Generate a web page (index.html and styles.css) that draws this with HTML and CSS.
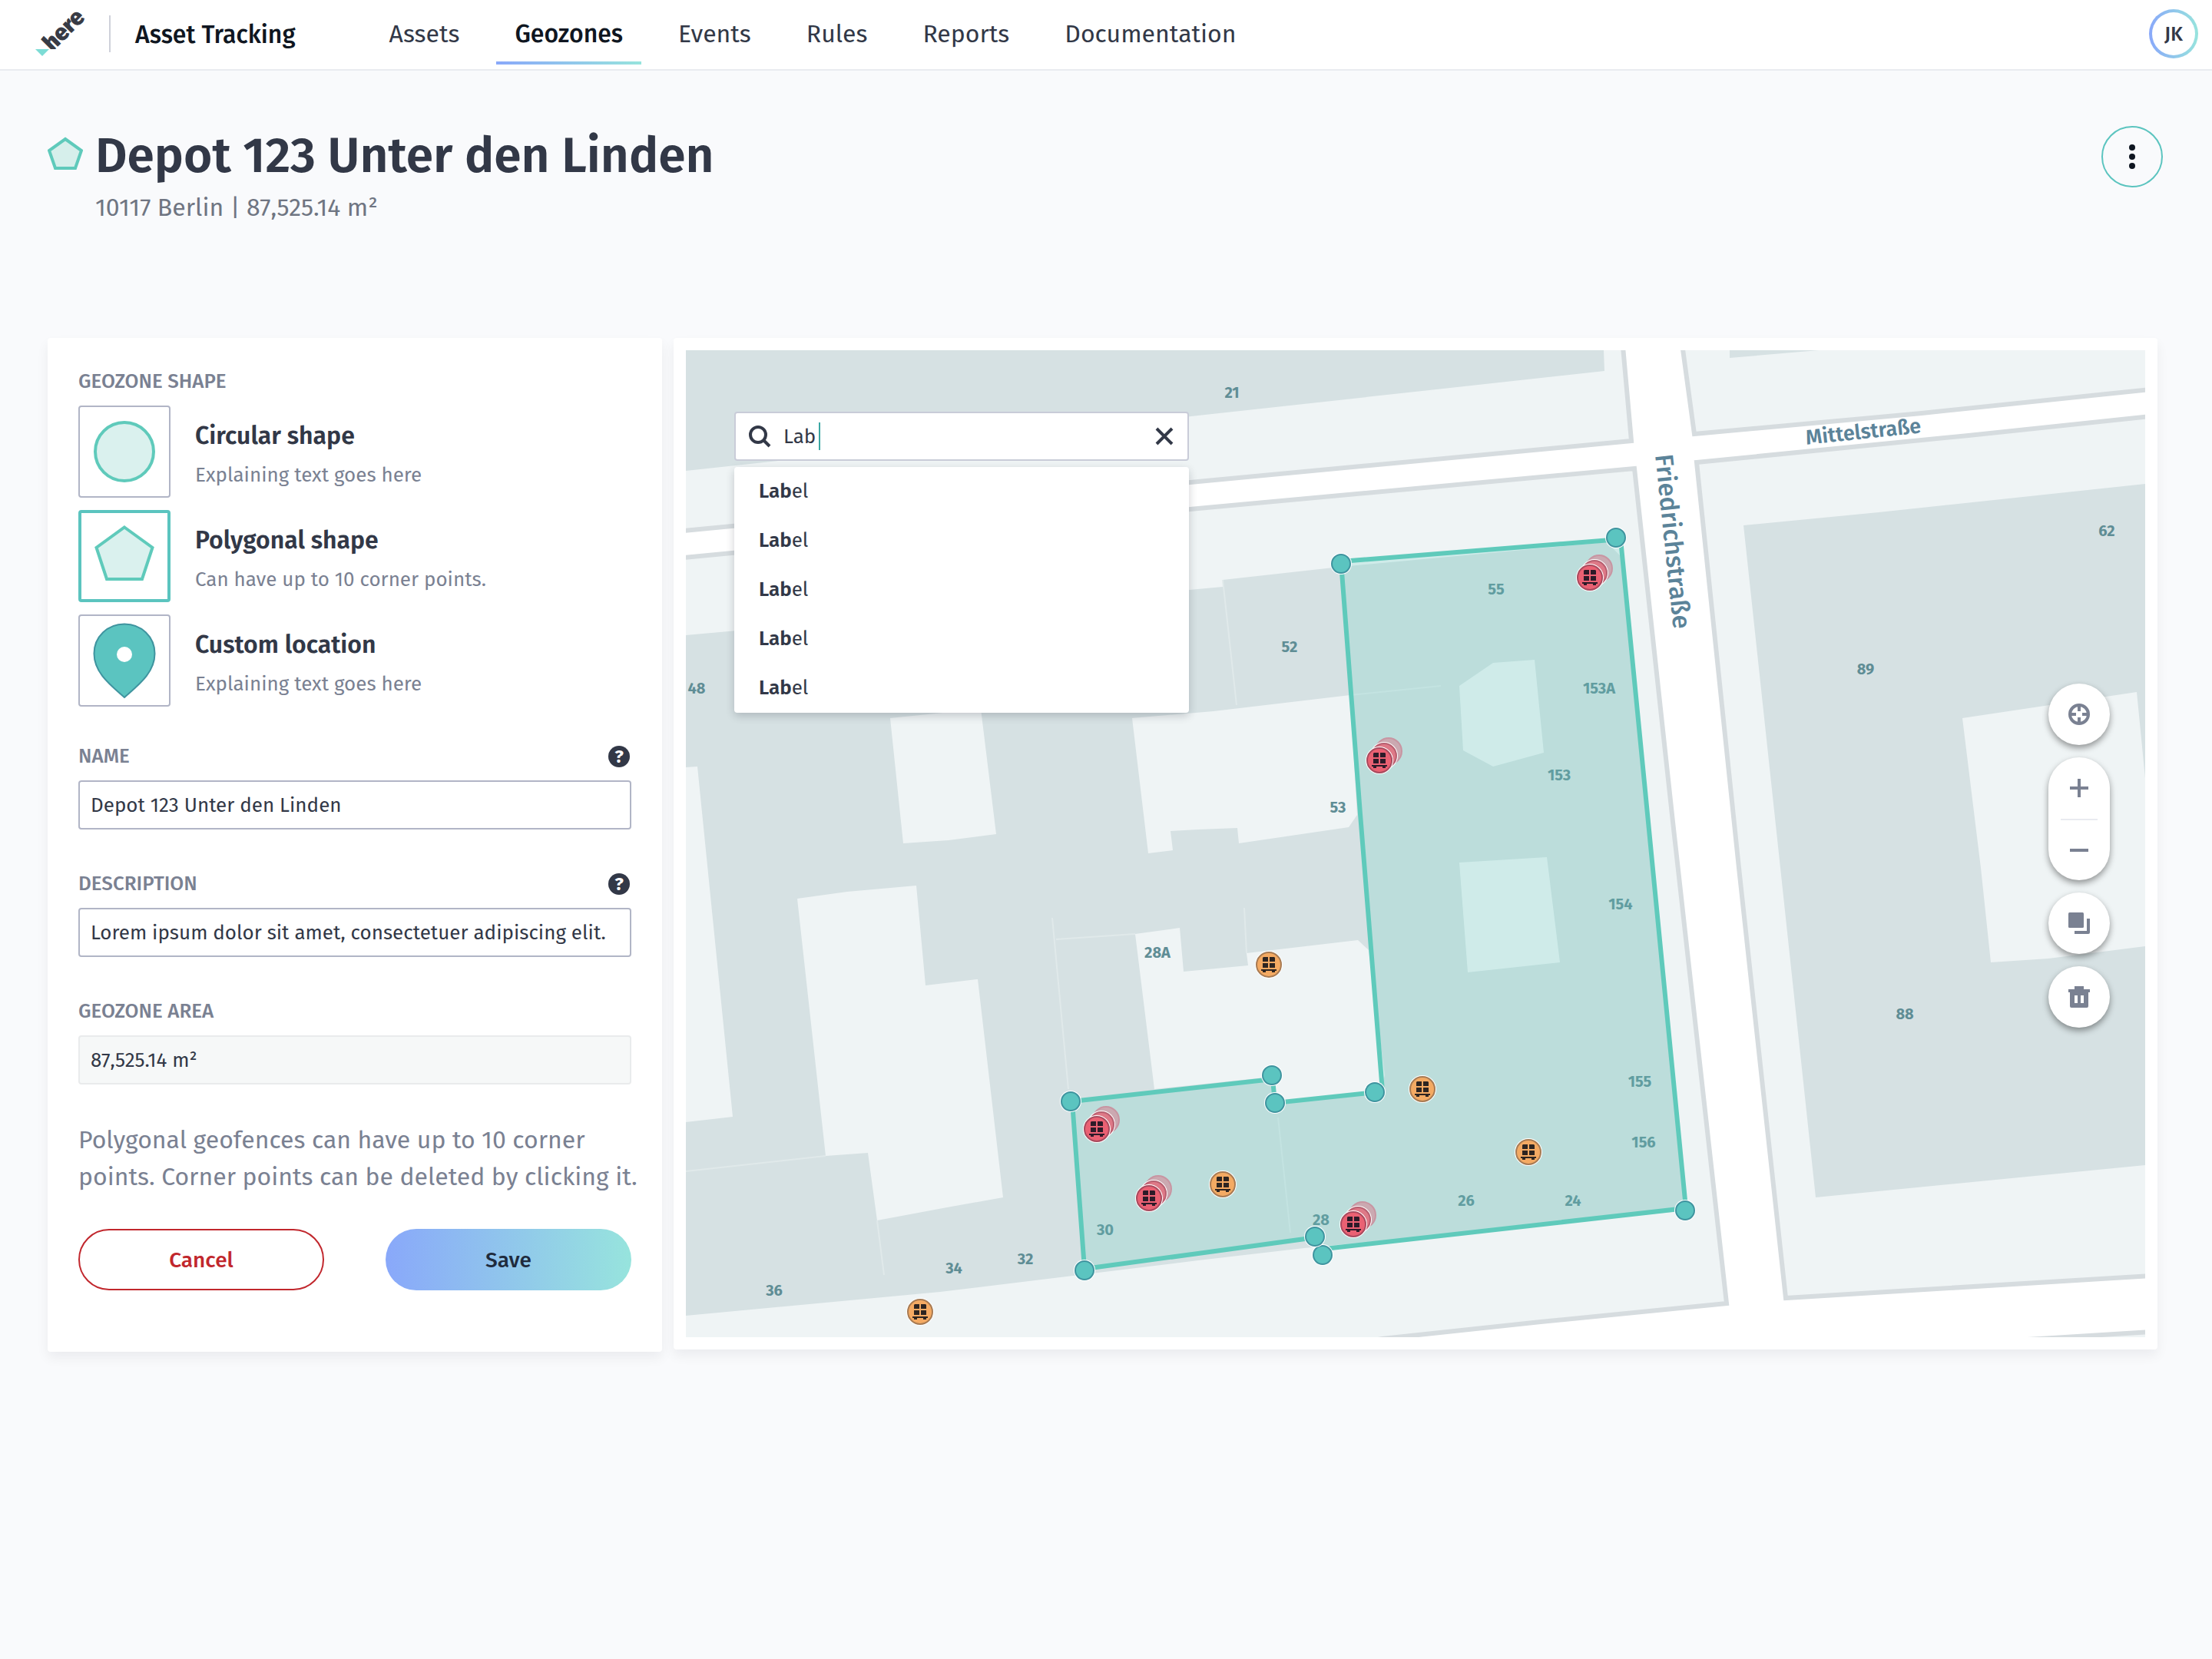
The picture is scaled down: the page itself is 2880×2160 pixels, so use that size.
FILE: index.html
```html
<!DOCTYPE html>
<html lang="en">
<head>
<meta charset="utf-8">
<meta name="viewport" content="width=device-width, initial-scale=1">
<title>Asset Tracking – Geozones</title>
<link rel="stylesheet" href="styles.css">
</head>
<body>
<header class="topbar">
  <a class="logo" href="#" aria-label="here">
    <svg width="68" height="68" viewBox="0 0 68 68" aria-hidden="true">
      <text class="logo-text" transform="translate(22 54) rotate(-45)">here</text>
      <path d="M0 50h34v12H0z" fill="#fff"/>
      <path d="M0 50h18l-9 9z" fill="#7ddcd5"/>
    </svg>
  </a>
  <span class="product">Asset Tracking</span>
  <nav class="nav">
    <a href="#">Assets</a>
    <a href="#" class="active" aria-current="page">Geozones</a>
    <a href="#">Events</a>
    <a href="#">Rules</a>
    <a href="#">Reports</a>
    <a href="#">Documentation</a>
  </nav>
  <button class="avatar" type="button">JK</button>
</header>

<main class="page">
  <div class="page-head">
    <div class="page-title">
      <h1>
        <svg width="46" height="44" viewBox="0 0 46 44" aria-hidden="true"><path d="M23 3 44 18 36 41H10L2 18z" fill="#d6efeb" stroke="#5fcabb" stroke-width="4"/></svg>
        Depot 123 Unter den Linden
      </h1>
      <p>10117 Berlin | 87,525.14 m²</p>
    </div>
    <button class="more" type="button" aria-label="More actions">
      <svg width="8" height="32" viewBox="0 0 8 32" fill="#0f1621"><circle cx="4" cy="4" r="4"/><circle cx="4" cy="16" r="4"/><circle cx="4" cy="28" r="4"/></svg>
    </button>
  </div>

  <div class="workspace">
    <form class="card editor">
      <fieldset class="shapes">
        <legend>GEOZONE SHAPE</legend>
        <label class="shape">
          <input type="radio" name="shape" value="circle">
          <span class="tile"><svg viewBox="0 0 120 120"><circle cx="60" cy="60" r="38" fill="#daf1ee" stroke="#5fcabb" stroke-width="4"/></svg></span>
          <span class="shape-text"><strong>Circular shape</strong><small>Explaining text goes here</small></span>
        </label>
        <label class="shape">
          <input type="radio" name="shape" value="polygon" checked>
          <span class="tile"><svg viewBox="0 0 120 120"><path d="M60 22.500 96.500 49 83 90H37L23.500 49z" fill="#daf1ee" stroke="#5fcabb" stroke-width="4"/></svg></span>
          <span class="shape-text"><strong>Polygonal shape</strong><small>Can have up to 10 corner points.</small></span>
        </label>
        <label class="shape">
          <input type="radio" name="shape" value="location">
          <span class="tile"><svg viewBox="0 0 120 120"><path d="M60 12.500C38 12.500 20.500 29 20.500 51 20.500 76 42 92 60 108 78 92 99.500 76 99.500 51 99.500 29 82 12.500 60 12.500z" fill="#5bc4c0" stroke="#3f949f" stroke-width="2"/><circle cx="60" cy="52" r="10" fill="#fff"/></svg></span>
          <span class="shape-text"><strong>Custom location</strong><small>Explaining text goes here</small></span>
        </label>
      </fieldset>

      <div class="field">
        <div class="field-head"><label for="name">NAME</label><button class="help" type="button" aria-label="Help for name">?</button></div>
        <input id="name" type="text" value="Depot 123 Unter den Linden">
      </div>
      <div class="field">
        <div class="field-head"><label for="description">DESCRIPTION</label><button class="help" type="button" aria-label="Help for description">?</button></div>
        <input id="description" type="text" value="Lorem ipsum dolor sit amet, consectetuer adipiscing elit.">
      </div>
      <div class="field">
        <div class="field-head"><label for="area">GEOZONE AREA</label></div>
        <input id="area" type="text" value="87,525.14 m²" readonly>
      </div>

      <p class="hint">Polygonal geofences can have up to 10 corner points. Corner points can be deleted by clicking it.</p>
      <div class="actions">
        <button class="btn cancel" type="button">Cancel</button>
        <button class="btn save" type="button">Save</button>
      </div>
    </form>

    <section class="card map-card" aria-label="Map">
      <div class="map">
        <svg class="map-canvas" viewBox="893 456 1900 1285" role="img" aria-label="Geozone map">
          <defs>
            <g id="crate">
              <path d="M-7-10h6v6h-7v-5zM1-10h6l1 1v5h-7zM-8-2h7v6h-7zM1-2h7v6h-7zM-10 6h20v2h-2v2h-4v-2h-8v2h-4v-2h-2z"/>
            </g>
            <g id="corner">
              <circle r="14" fill="#fff"/>
              <circle r="12" fill="#5bc4c0" stroke="#3f949f" stroke-width="2"/>
            </g>
            <g id="disc">
              <circle r="18" fill="#fff" stroke="none"/>
              <circle r="16" stroke-width="2"/>
            </g>
            <g id="alert">
              <g transform="translate(12 -12)"><circle r="17" fill="#cba9b1" stroke="#c895a2" stroke-width="2"/></g>
              <use href="#disc" x="6" y="-6" fill="#de7987" stroke="#b85f70"/>
              <use href="#disc" fill="#ea6173" stroke="#a94a5e"/>
              <use href="#crate" fill="#2d1b29"/>
            </g>
            <g id="asset">
              <use href="#disc" fill="#f4aa63" stroke="#a87b53"/>
              <use href="#crate" fill="#2e2521"/>
            </g>
          </defs>

          <rect x="893" y="456" width="1900" height="1285" fill="#fff"/>

          <!-- city blocks, outlined by the kerbs -->
          <g class="block">
            <path d="M880 440H2112L2124 574 1560 627 880 692z"/>
            <path d="M880 727 1560 662 2128 610 2178 1070 2248 1697 2006 1721 1800 1743 1700 1760H880z"/>
            <path d="M2189 440 2206 565 2502 538 2800 507V440z"/>
            <path d="M2209 602 2563 567 2800 542V1661L2325 1690 2264 1130z"/>
            <path d="M2640 1744 2800 1734V1760H2640z"/>
          </g>

          <!-- buildings -->
          <g class="building">
            <path d="M893 456H2088L2089 483 1560 541 893 613z"/>
            <path d="M893 827 1592 764V755L1745 738 2092 706 2110 724 2197 1576 1698 1625 1560 1641 1224 1682 893 1713z"/>
            <path d="M2252 456H2368L2252 466z"/>
            <path d="M2270 684 2446 667 2793 630V1517L2364 1559 2318 1130z"/>
          </g>

          <!-- courtyards -->
          <g class="yard">
            <path d="M893 999 908 998 954 1454 893 1461z"/>
            <path d="M1159 935 1277 923 1297 1086 1235 1094 1176 1098z"/>
            <path d="M1038 1170 1103 1161 1193 1153 1205 1283 1273 1275 1306 1559 1233 1572 1142 1589 1130 1501 1075 1505z"/>
            <path d="M1474 935 1580 926 1758 905 1767 1061 1756 1077 1613 1098 1611 1078 1560 1080 1524 1082 1527 1107 1495 1111z"/>
            <path d="M1478 1216 1536 1208 1541 1265 1625 1257 1623 1241 1768 1224 1782 1237 1803 1400 1798 1421 1660 1436 1656 1402 1503 1418z"/>
            <path d="M1900 893 1944 863 1998 859 2010 980 1944 998 1905 977z"/>
            <path d="M1900 1123 2014 1116 2031 1253 1911 1266z"/>
            <path d="M2555 935 2782 901 2793 1013V1232L2667 1248 2592 1253 2579 1130z"/>
          </g>
          <path class="seam" d="M1370 1195 1391 1418M1375 1223 1478 1216M893 1525 1075 1505M1142 1589 1151 1660M1592 755 1610 918M1758 905 1876 893M1620 1182 1623 1241M1664 1455 1680 1605"/>

          <g class="house-no">
            <text x="1604" y="518">21</text><text x="1948" y="774">55</text><text x="1679" y="849">52</text>
            <text x="2082" y="903">153A</text><text x="2030" y="1016">153</text><text x="1742" y="1058">53</text>
            <text x="907" y="903">48</text><text x="2743" y="698">62</text><text x="2429" y="878">89</text>
            <text x="2480" y="1327">88</text><text x="1507" y="1247">28A</text><text x="1439" y="1608">30</text>
            <text x="1335" y="1646">32</text><text x="1242" y="1658">34</text><text x="1008" y="1687">36</text>
            <text x="2110" y="1184">154</text><text x="2135" y="1415">155</text><text x="2140" y="1494">156</text>
            <text x="1909" y="1570">26</text><text x="2048" y="1570">24</text><text x="1720" y="1595">28</text>
          </g>
          <text class="street" transform="translate(2427 571) rotate(-6)">Mittelstraße</text>
          <text class="street major" transform="translate(2167 706) rotate(84)">Friedrichstraße</text>

          <path class="geofence" d="M1746 731 2110 702 2145 1060 2195 1573 1716 1627 1714 1611 1560 1632 1412 1652 1396 1434 1657 1405 1660 1436 1800 1421 1771 1060z"/>
          <use href="#alert" x="2070" y="752"/><use href="#alert" x="1796" y="990"/><use href="#alert" x="1428" y="1470"/>
          <use href="#alert" x="1496" y="1560"/><use href="#alert" x="1762" y="1594"/>
          <use href="#asset" x="1198" y="1708"/><use href="#asset" x="1652" y="1256"/><use href="#asset" x="1852" y="1418"/>
          <use href="#asset" x="1990" y="1500"/><use href="#asset" x="1592" y="1542"/>
          <use href="#corner" x="1746" y="734"/><use href="#corner" x="2104" y="700"/><use href="#corner" x="2194" y="1576"/>
          <use href="#corner" x="1722" y="1634"/><use href="#corner" x="1712" y="1610"/><use href="#corner" x="1412" y="1654"/>
          <use href="#corner" x="1394" y="1434"/><use href="#corner" x="1656" y="1400"/><use href="#corner" x="1660" y="1436"/>
          <use href="#corner" x="1790" y="1422"/>
        </svg>

        <div class="search">
          <div class="search-box">
            <svg width="30" height="30" viewBox="0 0 30 30" fill="none" stroke="#323847" stroke-width="4" aria-hidden="true"><circle cx="13" cy="13" r="10"/><path d="M20 20l8 8"/></svg>
            <input type="text" value="Lab" aria-label="Search the map" size="3">
            <span class="caret"></span>
            <button type="button" aria-label="Clear search">
              <svg width="24" height="24" viewBox="0 0 24 24" stroke="#323847" stroke-width="4"><path d="M2 2l20 20M22 2 2 22"/></svg>
            </button>
          </div>
          <ul class="suggestions">
            <li><a href="#"><b>Lab</b>el</a></li>
            <li><a href="#"><b>Lab</b>el</a></li>
            <li><a href="#"><b>Lab</b>el</a></li>
            <li><a href="#"><b>Lab</b>el</a></li>
            <li><a href="#"><b>Lab</b>el</a></li>
          </ul>
        </div>

        <div class="controls">
          <button class="round" type="button" aria-label="Center map">
            <svg width="28" height="28" viewBox="0 0 28 28" fill="none" stroke="#7a8192" stroke-width="4"><circle cx="14" cy="14" r="12"/><path d="M14 2v8M14 18v8M2 14h8M18 14h8"/></svg>
          </button>
          <div class="zoom">
            <button type="button" aria-label="Zoom in"><svg width="24" height="24" viewBox="0 0 24 24" fill="#7a8192"><path d="M10 0h4v10h10v4H14v10h-4V14H0v-4h10z"/></svg></button>
            <button type="button" aria-label="Zoom out"><svg width="24" height="24" viewBox="0 0 24 24" fill="#7a8192"><path d="M0 10h24v4H0z"/></svg></button>
          </div>
          <button class="round" type="button" aria-label="Duplicate">
            <svg width="28" height="28" viewBox="0 0 28 28" fill="#7a8192"><rect width="20" height="20" rx="1.500"/><path d="M24 8h4v18a2 2 0 0 1-2 2H8v-4h16z"/></svg>
          </button>
          <button class="round" type="button" aria-label="Delete">
            <svg width="28" height="28" viewBox="0 0 28 28" fill="#7a8192" fill-rule="evenodd"><path d="M8 0h12v4h8v4h-2v18a2 2 0 0 1-2 2H4a2 2 0 0 1-2-2V8H0V4h8zM8 12v10h4V12zM16 12v10h4V12z"/></svg>
          </button>
        </div>
      </div>
    </section>
  </div>
</main>
</body>
</html>
```
FILE: styles.css
```css
:root {
  --ink: #323847;
  --muted: #7a8192;
  --line: #b1b5c6;
  --teal: #5bc4bf;
  --gradient: linear-gradient(90deg, #89a8fa, #97e4dd);
}

* { box-sizing: border-box; }

body {
  margin: 0;
  min-height: 100vh;
  background: #f9fafc;
  color: var(--ink);
  font-family: "Fira Sans", "Noto Sans", sans-serif;
  font-size: 26px;
}

button, input { font: inherit; color: inherit; }
button { padding: 0; border: 0; background: none; cursor: pointer; }
svg { display: block; flex: none; }
a { color: inherit; text-decoration: none; }

/* top bar */
.topbar {
  display: flex;
  align-items: center;
  height: 92px;
  padding: 0 18px 2px 46px;
  background: #fff;
  border-bottom: 2px solid #e9ebf0;
}
.logo {
  display: flex;
  align-items: center;
  height: 48px;
  margin-right: 32px;
  padding-right: 28px;
  border-right: 2px solid #cfd1da;
}
.logo svg { margin-top: 8px; overflow: visible; }
.logo-text { font-weight: 900; font-size: 30px; fill: #383b45; }
.product {
  margin-top: 2px;
  color: #0f1621;
  font-size: 32px;
  font-weight: 500;
}
.nav {
  display: flex;
  align-self: flex-end;
  gap: 24px;
  margin: 0 auto 4px 98px;
}
.nav a {
  padding: 0 24px 16px;
  border-bottom: 4px solid transparent;
  font-size: 32px;
  line-height: 40px;
}
.nav .active {
  color: #0f1621;
  font-weight: 500;
  border-image: var(--gradient) 1;
}
.avatar {
  width: 64px;
  height: 64px;
  border: 4px solid transparent;
  border-radius: 50%;
  background: linear-gradient(#fff, #fff) padding-box, var(--gradient) border-box;
  font-weight: 500;
}

/* page heading */
.page { padding: 68px 64px 0 62px; }
.page-head {
  display: flex;
  align-items: flex-start;
  justify-content: space-between;
  margin-bottom: 146px;
}
h1 {
  display: flex;
  align-items: center;
  gap: 16px;
  margin: 0;
  font-size: 64px;
  font-weight: 600;
  line-height: 86px;
}
h1 svg { margin-bottom: 6px; }
.page-title p {
  margin: 0;
  padding-left: 62px;
  color: #6f7582;
  font-size: 32px;
  line-height: 48px;
}
.more {
  display: grid;
  place-items: center;
  width: 80px;
  height: 80px;
  margin-top: 4px;
  border: 2px solid var(--teal);
  border-radius: 50%;
}

/* two-column workspace */
.workspace {
  display: grid;
  grid-template-columns: 800px minmax(0, 1fr);
  align-items: start;
  gap: 15px;
  padding-right: 7px;
}
.card {
  background: #fff;
  border-radius: 4px;
  box-shadow: 0 8px 16px rgba(15, 22, 33, .06);
}

/* editor form */
.editor {
  display: flex;
  flex-direction: column;
  padding: 40px 40px 80px;
}
.shapes {
  display: flex;
  flex-direction: column;
  gap: 16px;
  margin: 0 0 48px;
  padding: 0;
  border: 0;
}
legend, .field-head {
  padding: 0;
  margin-bottom: 14px;
  color: var(--muted);
  font-weight: 500;
  line-height: 34px;
}
.shape {
  position: relative;
  display: flex;
  align-items: center;
  gap: 32px;
  cursor: pointer;
}
.shape input {
  position: absolute;
  opacity: 0;
}
.tile {
  width: 120px;
  height: 120px;
  border: 2px solid var(--line);
  border-radius: 4px;
}
.tile svg { margin: -2px; width: 120px; }
.shape input:checked + .tile { border: 4px solid var(--teal); }
.shape input:checked + .tile svg { margin: -4px; }
.shape-text { display: flex; flex-direction: column; gap: 12px; padding-top: 10px; }
.shape-text strong { font-size: 32px; font-weight: 600; line-height: 40px; }
.shape-text small { color: var(--muted); font-size: 26px; line-height: 40px; }

.field { margin-bottom: 54px; }
.field-head {
  display: flex;
  align-items: center;
  justify-content: space-between;
}
.help {
  width: 28px;
  height: 28px;
  margin-right: 2px;
  border-radius: 50%;
  background: var(--ink);
  color: #fff;
  font-size: 24px;
  font-weight: 700;
  line-height: 28px;
}
.field input {
  display: block;
  width: 100%;
  height: 64px;
  padding: 0 14px;
  border: 2px solid var(--line);
  border-radius: 4px;
  background: #fff;
}
.field input[readonly] {
  border-color: #e9ebec;
  background: #f6f8f8;
}
.hint {
  margin: -6px -16px 44px 0;
  color: var(--muted);
  font-size: 32px;
  line-height: 48px;
}
.actions {
  display: grid;
  grid-template-columns: 1fr 1fr;
  gap: 80px;
}
.btn {
  height: 80px;
  border-radius: 40px;
  font-size: 28px;
  font-weight: 500;
}
.cancel { border: 2px solid #c1272d; color: #c1272d; }
.save { background: var(--gradient); color: #1f2b3d; }

/* map */
.map-card { padding: 16px; }
.map { position: relative; overflow: hidden; }
.map-canvas { width: 100%; height: auto; }
.block { fill: #eff4f5; stroke: #d6dcdf; stroke-width: 6px; }
.building { fill: #d6e1e3; }
.yard { fill: #eff4f5; }
.seam { fill: none; stroke: #e0e9ea; stroke-width: 2px; }
.house-no {
  fill: #5f8d95;
  font-size: 20px;
  font-weight: 700;
  text-anchor: middle;
}
.street {
  fill: #5b8399;
  stroke: #fff;
  stroke-width: 2px;
  paint-order: stroke;
  font-size: 27px;
  font-weight: 600;
  text-anchor: middle;
}
.major { font-size: 33px; font-weight: 500; }
.geofence {
  fill: rgba(105, 208, 198, .24);
  stroke: #5fcabb;
  stroke-width: 6px;
}

/* search overlay */
.search {
  position: absolute;
  top: 80px;
  left: 63px;
  display: flex;
  flex-direction: column;
  gap: 8px;
  width: 592px;
}
.search-box {
  display: flex;
  align-items: center;
  height: 64px;
  padding: 0 18px 0 16px;
  border: 2px solid #c9ccd8;
  border-radius: 4px;
  background: #fff;
}
.search-box input {
  field-sizing: content;
  width: auto;
  margin: 0 4px 0 16px;
  padding: 0;
  border: 0;
  outline: 0;
}
.caret { width: 2px; height: 36px; background: #3ba7a3; }
.search-box button { margin-left: auto; }
.suggestions {
  margin: 0;
  padding: 0;
  border-radius: 4px;
  background: #fff;
  box-shadow: 0 4px 12px rgba(15, 22, 33, .2);
  list-style: none;
}
.suggestions a {
  display: block;
  padding: 0 32px;
  line-height: 64px;
}
.suggestions b { font-weight: 600; }

/* map controls */
.controls {
  position: absolute;
  top: 434px;
  right: 46px;
  display: flex;
  flex-direction: column;
  gap: 16px;
}
.round, .zoom {
  width: 80px;
  border-radius: 40px;
  background: #fff;
  box-shadow: 0 4px 8px rgba(0, 0, 0, .4);
}
.round { display: grid; place-items: center; height: 80px; }
.zoom button {
  display: grid;
  place-items: center;
  width: 48px;
  height: 80px;
  margin: 0 auto;
}
.zoom button + button { border-top: 2px solid #e9ebf0; }
```
